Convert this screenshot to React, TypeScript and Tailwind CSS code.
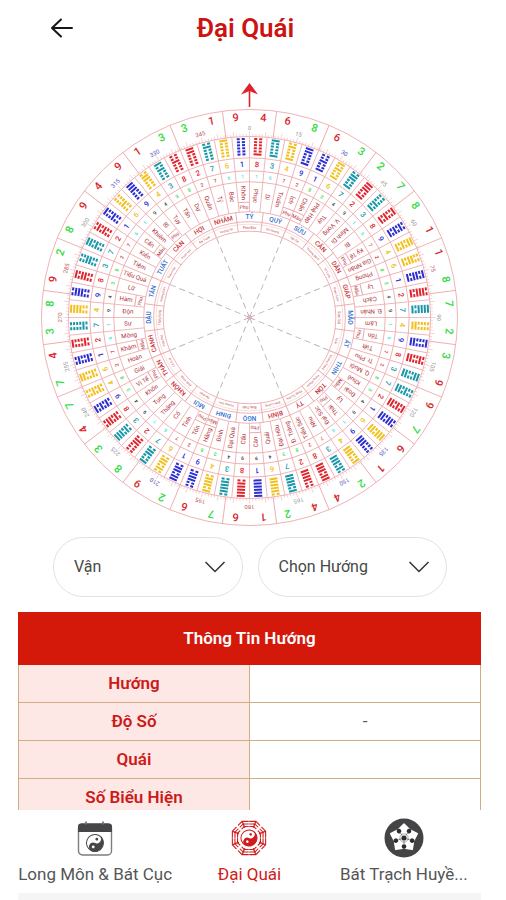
import { useState } from 'react';

const RED = '#d8262b';
const GREEN = '#2fdc3f';
const GRAY = '#9a9a9a';
const BLUE = '#2c2cd0';
const LINE = '#eda9ac';

const STEP = 360 / 64;

// two digits per 15° sector, clockwise from north
const OUTER: [number, number][] = [
  [9, 4], [6, 8], [6, 3], [2, 7], [8, 1], [1, 8], [7, 2], [3, 9],
  [9, 7], [6, 1], [2, 4], [4, 2], [1, 6], [7, 6], [2, 9], [8, 3],
  [4, 7], [7, 4], [3, 8], [9, 2], [8, 9], [4, 9], [1, 3], [3, 1],
];

const DEGREE_COLORS = [
  GRAY, GRAY, '#5a5ab8', GRAY, GRAY, '#c4575b', GRAY, GRAY, GRAY, '#5a5ab8', '#5a5ab8', GRAY,
  '#c4575b', '#c4575b', '#5a5ab8', GRAY, GRAY, GRAY, '#c4575b', '#c4575b', GRAY, '#5a5ab8', '#5a5ab8', '#c4575b',
];

const MOUNTAINS = [
  'TÝ', 'QUÝ', 'SỬU', 'CẤN', 'DẦN', 'GIÁP', 'MÃO', 'ẤT', 'THÌN', 'TỐN', 'TỴ', 'BÍNH',
  'NGỌ', 'ĐINH', 'MÙI', 'KHÔN', 'THÂN', 'CANH', 'DẬU', 'TÂN', 'TUẤT', 'CÀN', 'HỢI', 'NHÂM',
];

const BLUE_MOUNTAINS = [0, 1, 2, 6, 7, 8, 12, 13, 14, 18, 19, 20];

const STARS = [
  'Phúc Đức', 'Ôn Hoàng', 'Tấn Tài', 'Trường Bệnh', 'Tố Tụng', 'Quan Tước', 'Quan Quý', 'Tự Ải',
  'Vượng Trang', 'Hưng Phước', 'Pháp Trường', 'Điên Cuồng', 'Khẩu Thiệt', 'Vượng Tàm', 'Tấn Điền', 'Khốc Khấp',
  'Cô Quả', 'Vinh Phú', 'Thiếu Vong', 'Xướng Dâm', 'Thân Hôn', 'Hoan Lạc', 'Bại Tuyệt', 'Vượng Tài',
];

const NAMES = [
  'Phục', 'Di', 'Truân', 'Ích', 'Chấn', 'Phệ Hạp', 'Tùy', 'V. Vọng', 'Minh Di', 'Bí', 'Ký Tế', 'Gia Nhân', 'Phong', 'Ly', 'Cách', 'Đ. Nhân',
  'Lâm', 'Tổn', 'Tiết', 'Tr. Phu', 'Q. Muội', 'Khuê', 'Đoài', 'Lý', 'Thái', 'Đại Súc', 'Nhu', 'Tiểu Súc', 'Đ. Tráng', 'Đại Hữu', 'Quải', 'Càn',
  'Cấu', 'Đại Quá', 'Đỉnh', 'Hằng', 'Tốn', 'Tỉnh', 'Cổ', 'Thăng', 'Tụng', 'Khốn', 'Vị Tế', 'Giải', 'Hoán', 'Khảm', 'Mông', 'Sư',
  'Độn', 'Hàm', 'Lữ', 'Tiểu Quá', 'Tiệm', 'Kiển', 'Cấn', 'Khiêm', 'Bĩ', 'Tụy', 'Tấn', 'Dự', 'Quán', 'Tỷ', 'Bác', 'Khôn',
];

const A = [8, 3, 4, 9, 1, 6, 7, 2, 3, 8, 9, 4, 6, 1, 2, 7];
const B = [4, 9, 8, 3, 7, 2, 1, 6, 9, 4, 3, 8, 2, 7, 6, 1];
const HEX_NUMBERS = [...A, ...B, ...A, ...B];

const UP = [1, 6, 7, 2, 8, 3, 4, 9];
const DOWN = [9, 4, 3, 8, 2, 7, 6, 1];
const SMALL_NUMBERS = [...UP, ...UP, ...UP, ...UP, ...DOWN, ...DOWN, ...DOWN, ...DOWN];

const BOXED: Record<number, string> = {
  3: 'Phụ', 4: 'Mẫu', 10: 'Phụ', 13: 'Mẫu', 17: 'Phụ', 22: 'Mẫu', 24: 'Phụ', 31: 'Phụ',
  35: 'Mẫu', 36: 'Phụ', 42: 'Phụ', 45: 'Mẫu', 49: 'Phụ', 54: 'Mẫu', 56: 'Phụ', 63: 'Phụ',
};

function hexColor(n: number) {
  if (n === 1 || n === 9) return BLUE;
  if (n === 2 || n === 8) return '#e0242e';
  if (n === 3 || n === 7) return '#1797a8';
  return '#f2c01e';
}

// ring of small numbers: the first pair next to north is cyan
function smallColor(n: number) {
  if (n === 1 || n === 6) return '#3fe3d8';
  if (n === 2 || n === 7) return RED;
  if (n === 3 || n === 8) return GREEN;
  return '#333333';
}

function outerColor(n: number) {
  return [1, 4, 6, 9].includes(n) ? RED : GREEN;
}

function Hexagram({ index, color }: { index: number; color: string }) {
  const value = index < 32 ? 32 + index : 63 - index;
  return (
    <g fill={color}>
      {[0, 1, 2, 3, 4, 5].map((row) => {
        const y = -180 + row * 3.1;
        const solid = (value >> row) & 1;
        return solid ? (
          <rect key={row} x="-4" y={y} width="8" height="2" />
        ) : (
          <g key={row}>
            <rect x="-4" y={y} width="3" height="2" />
            <rect x="1" y={y} width="3" height="2" />
          </g>
        );
      })}
    </g>
  );
}

function Compass() {
  return (
    <svg
      viewBox="-232 -236 464 455"
      className="mx-auto block w-full max-w-[520px]"
      fontFamily='Roboto, "Liberation Sans", sans-serif'
      textAnchor="middle"
      role="img"
      aria-label="La bàn Đại Quái"
    >
      <g fill="none" stroke={LINE} strokeWidth="0.9">
        {[208.5, 181.5, 160, 147, 136, 106, 96, 86.5].map((r) => (
          <circle key={r} r={r} />
        ))}
        <circle r="93.5" strokeWidth="0.4" />
        {Array.from({ length: 360 }, (_, d) => (
          <path key={d} d={d % 5 === 0 ? 'M0-181.5v-5' : 'M0-181.5v-2.5'} strokeWidth="0.5" transform={`rotate(${d})`} />
        ))}
        {NAMES.map((name, i) => (
          <path key={name} d="M0-181.5V-106" strokeWidth="0.8" transform={`rotate(${i * STEP})`} />
        ))}
        {MOUNTAINS.map((name, i) => (
          <path key={name} d="M0-208.5v27M0-106v19.5" transform={`rotate(${i * 15 + 7.5})`} />
        ))}
      </g>

      {OUTER.map(([a, b], i) => (
        <g key={i} transform={`rotate(${i * 15})`}>
          <text y="-197" fontSize="11" fontWeight="500" fill={outerColor(a)} transform="rotate(-4)">{a}</text>
          <text y="-197" fontSize="11" fontWeight="500" fill={outerColor(b)} transform="rotate(4)">{b}</text>
          <text y="-188" fontSize="6" fill={DEGREE_COLORS[i]}>{i * 15}</text>
          <text y="-98.5" fontSize="6.5" fontWeight="500" fill={BLUE_MOUNTAINS.includes(i) ? '#2b6fd0' : '#c9343a'}>{MOUNTAINS[i]}</text>
          <text y="-89" fontSize="3" fill="#b5484c">{STARS[i]}</text>
        </g>
      ))}

      {NAMES.map((name, i) => {
        const n = HEX_NUMBERS[i];
        const small = SMALL_NUMBERS[i];
        const boxed = BOXED[i];
        return (
          <g key={name} transform={`rotate(${(i + 0.5) * STEP})`}>
            <Hexagram index={i} color={hexColor(n)} />
            <text y="-151" fontSize="7.5" fontWeight="500" fill={hexColor(n)}>{n}</text>
            <text y="-139.5" fontSize="5" fontWeight="500" fill={smallColor(small)}>{small}</text>
            <text x={boxed ? -125 : -122} y="2" fontSize="6.2" fill="#b02e35" transform="rotate(90)">{name}</text>
            {boxed && (
              <>
                <path d="M-5.600-115.500H5.600" stroke="#eba0a3" strokeWidth="0.9" />
                <text y="-109" fontSize="5" fill="#b02e35">{boxed}</text>
              </>
            )}
          </g>
        );
      })}

      <g stroke="#bdb3b6" strokeWidth="0.9" strokeDasharray="6 4">
        {[0, 1, 2, 3, 4, 5, 6, 7].map((k) => (
          <path key={k} d="M0 0V-86" transform={`rotate(${k * 45 + 22.5})`} />
        ))}
      </g>
      <circle r="2" fill="none" stroke="#e6a3a5" strokeWidth="0.7" />

      <path d="M0-211v-19" stroke="#dd2329" strokeWidth="1.6" />
      <path d="M0-235l8.5 11.5L0-227L-8.500-223.500Z" fill="#dd2329" />
    </svg>
  );
}

function Picker({ label, options }: { label: string; options: string[] }) {
  const [value, setValue] = useState('');
  return (
    <div className="relative flex-1">
      <select
        aria-label={label}
        value={value}
        onChange={(e) => setValue(e.target.value)}
        className="h-[60px] w-full appearance-none rounded-full border border-[#e2e2e2] bg-white pr-12 pl-5 text-base text-[#484848]"
      >
        <option value="">{label}</option>
        {options.map((o) => (
          <option key={o} value={o}>{o}</option>
        ))}
      </select>
      <svg viewBox="0 0 22 12" className="pointer-events-none absolute top-6 right-[17px] h-3 w-[22px]" fill="none" stroke="#333" strokeWidth="1.5">
        <path d="M1.500 1L11 10.500 20.500 1" />
      </svg>
    </div>
  );
}

// yin-yang disc centred on the origin
function YinYang({ r, dark }: { r: number; dark: string }) {
  const h = r / 2;
  return (
    <g>
      <circle r={r} fill="#fff" stroke={dark} strokeWidth="1" />
      <path d={`M0 ${-r}A${r} ${r} 0 0 1 0 ${r}A${h} ${h} 0 0 1 0 0A${h} ${h} 0 0 0 0 ${-r}Z`} fill={dark} stroke="none" />
      <circle cy={h} r={r / 6} fill="#fff" stroke="none" />
      <circle cy={-h} r={r / 6} fill={dark} stroke="none" />
    </g>
  );
}

function CalendarIcon() {
  return (
    <svg viewBox="0 0 36 36" className="h-9 w-9" fill="none">
      <rect x="1.500" y="4" width="33" height="31" rx="4" stroke="#7d7d7d" strokeWidth="1.4" />
      <path d="M1 12V6.500q0-3 3-3h28q3 0 3 3V12Z" fill="#464648" />
      <path d="M9 1.500v3M26 1.500v3" stroke="#77777a" strokeWidth="1.8" />
      <g transform="translate(18 23) rotate(25)">
        <YinYang r={8.5} dark="#464648" />
      </g>
    </svg>
  );
}

function BaguaIcon() {
  const ring = (r: number) =>
    Array.from({ length: 8 }, (_, k) => {
      const a = ((k * 45 + 22.5) * Math.PI) / 180;
      return `${r * Math.cos(a)},${r * Math.sin(a)}`;
    }).join(' ');
  return (
    <svg viewBox="-19 -19 38 38" className="h-[38px] w-[38px]" fill="none" stroke="#cf1d1d">
      <polygon points={ring(18)} strokeWidth="1.1" />
      <polygon points={ring(15.2)} strokeWidth="1.1" />
      <polygon points={ring(12.4)} strokeWidth="1.1" />
      {[0, 1, 2, 3, 4, 5, 6, 7].map((k) => (
        <g key={k} transform={`rotate(${k * 45})`}>
          <path d="M10.500 0H18" stroke="#fff" strokeWidth={k % 2 ? 2 : 0.5} />
          <path d="M11 0H17.500" strokeWidth="1.3" transform="rotate(22.500)" />
        </g>
      ))}
      <g transform="rotate(25)">
        <YinYang r={8} dark="#cf1d1d" />
      </g>
    </svg>
  );
}

function StarIcon() {
  const angles = [0, 72, 144, 216, 288];
  return (
    <svg viewBox="-20 -20 40 40" className="h-10 w-10">
      <circle r="19.500" fill="#444446" />
      {angles.map((a) => (
        <path key={a} d="M0-14L5-9 6 0H-6L-5-9Z" fill="#fff" stroke="#fff" strokeWidth="1.500" strokeLinejoin="round" transform={`rotate(${a})`} />
      ))}
      {angles.map((a) => (
        <g key={a} transform={`rotate(${a + 36})`} fill="#2d2d2f">
          <circle cy="-8.500" r="2.300" />
          <path d="M0-6V-3" stroke="#666" strokeWidth="0.8" />
        </g>
      ))}
      <circle r="2.600" fill="#2d2d2f" />
      <circle r="4.200" fill="none" stroke="#777" strokeWidth="0.6" />
    </svg>
  );
}

const ROWS = [
  { label: 'Hướng', value: '' },
  { label: 'Độ Số', value: '-' },
  { label: 'Quái', value: '' },
  { label: 'Số Biểu Hiện', value: '' },
];

const TABS = [
  { label: 'Long Môn & Bát Cục', icon: <CalendarIcon />, active: false },
  { label: 'Đại Quái', icon: <BaguaIcon />, active: true },
  { label: 'Bát Trạch Huyề...', icon: <StarIcon />, active: false },
];

export default function App() {
  return (
    <div className="flex h-screen flex-col bg-white pr-[25px] pl-[18px] font-[Roboto,'Liberation_Sans',sans-serif]">
      <header className="grid h-14 shrink-0 grid-cols-[1fr_auto_1fr] items-center pr-2">
        <button type="button" aria-label="Quay lại" className="ml-8 w-6">
          <svg viewBox="0 0 24 20" className="h-5 w-6" fill="none" stroke="#161616" strokeWidth="2" strokeLinecap="round" strokeLinejoin="round">
            <path d="M22 10H2M11 1.500L2 10l9 8.500" />
          </svg>
        </button>
        <h1 className="text-[26px] font-semibold text-[#cc1413]">Đại Quái</h1>
      </header>

      <main className="min-h-0 flex-1 overflow-y-auto pt-[26px] [scrollbar-width:none]">
        <Compass />

        <div className="mt-px flex gap-[15px] pr-[34px] pl-[35px]">
          <Picker label="Vận" options={['Vận 7', 'Vận 8', 'Vận 9']} />
          <Picker label="Chọn Hướng" options={MOUNTAINS} />
        </div>

        <table className="mt-[15px] w-full table-fixed border-collapse text-center text-[17px]">
          <thead>
            <tr className="h-[52px] bg-[#d4190b] text-white">
              <th colSpan={2} className="border border-[#d4190b] font-semibold">Thông Tin Hướng</th>
            </tr>
          </thead>
          <tbody>
            {ROWS.map((row) => (
              <tr key={row.label} className="h-[38px]">
                <th scope="row" className="border border-[#cfae85] bg-[#fde8e6] font-semibold text-[#cc1a18]">{row.label}</th>
                <td className="border border-[#cfae85] text-[#555]">{row.value}</td>
              </tr>
            ))}
          </tbody>
        </table>
      </main>

      <nav className="grid h-[83px] shrink-0 grid-cols-3 pt-2">
        {TABS.map((tab) => (
          <a
            key={tab.label}
            href="#"
            aria-current={tab.active ? 'page' : undefined}
            className={`flex flex-col items-center gap-1 text-[17px] leading-6 whitespace-nowrap ${tab.active ? 'text-[#cf2020]' : 'text-[#555]'}`}
          >
            <span className="flex h-10 items-center">{tab.icon}</span>
            <span>{tab.label}</span>
          </a>
        ))}
      </nav>
      <div className="h-[7px] shrink-0 bg-[#f5f5f5]" />
    </div>
  );
}
